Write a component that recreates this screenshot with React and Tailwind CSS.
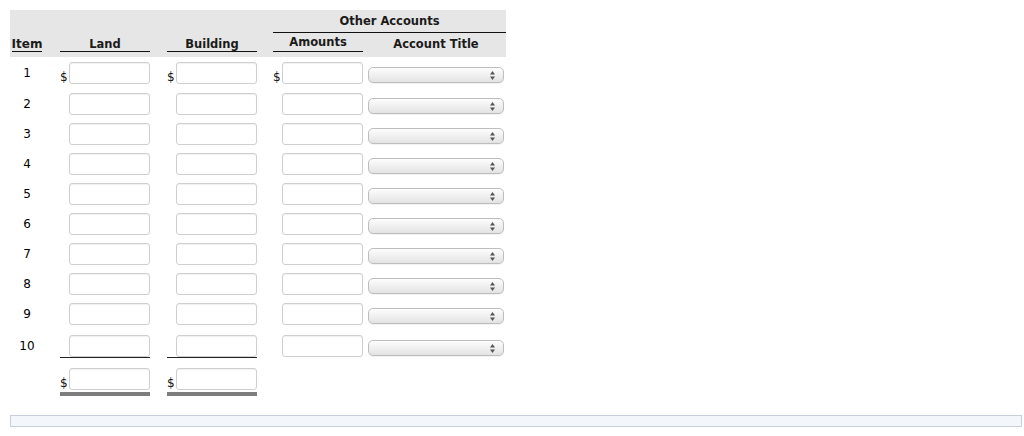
import React from "react";

const font = { fontFamily: "'DejaVu Sans', Verdana, sans-serif" };

function Input() {
  return (
    <div className="w-[81px] h-[22px] border border-[#cfcfcf] rounded-[3px] bg-white shadow-[inset_0_1px_1px_rgba(0,0,0,0.06)]" />
  );
}

function Money({ dollar }) {
  return (
    <div className="flex items-end">
      <span className="w-[9px] text-[12px] leading-[14px] text-[#111]">{dollar ? "$" : ""}</span>
      <Input />
    </div>
  );
}

function Select() {
  return (
    <div className="relative w-[136px] h-[16px] rounded-[5px] border border-[#bdbdbd] bg-gradient-to-b from-[#fdfdfd] to-[#e3e3e3] shadow-[0_1px_0_rgba(0,0,0,0.05)]">
      <svg className="absolute right-[8px] top-[3px]" width="5" height="9" viewBox="0 0 5 9">
        <polygon points="2.5,0 5,3.5 0,3.5" fill="#555" />
        <polygon points="0,5.5 5,5.5 2.5,9" fill="#555" />
      </svg>
    </div>
  );
}

function Row({ n, dollar, h, pt, last }) {
  return (
    <div className={`flex items-start ${h} ${pt}`}>
      <div className="w-[34px] h-[22px] flex items-center justify-center text-[12px] text-black">{n}</div>
      <div className="w-[118px] pl-[16px]">
        <div className={`w-[90px] ${last ? "border-b border-[#222]" : ""}`}>
          <Money dollar={dollar} />
        </div>
      </div>
      <div className="w-[106px] pl-[5px]">
        <div className={`w-[90px] ${last ? "border-b border-[#222]" : ""}`}>
          <Money dollar={dollar} />
        </div>
      </div>
      <div className="w-[98px] pl-[5px]">
        <div className="w-[90px]">
          <Money dollar={dollar} />
        </div>
      </div>
      <div className="w-[140px] pl-[2px] h-[22px] flex items-center pt-[3px]">
        <Select />
      </div>
    </div>
  );
}

export default function App() {
  const rows = [1, 2, 3, 4, 5, 6, 7, 8, 9, 10];
  return (
    <div className="bg-white w-[1024px] h-[436px] pt-[10px] pl-[10px]" style={font}>
      <div className="w-[496px]">
        <div className="bg-[#e6e6e6] h-[47px] text-[#1a1a1a] font-bold">
          <div className="flex h-[23px]">
            <div className="w-[263px]" />
            <div className="w-[233px] border-b border-[#111] text-center text-[11.5px] leading-[20px] pt-[1px]">Other Accounts</div>
          </div>
          <div className="flex items-end h-[24px]">
            <div className="w-[34px] pb-[5px] flex justify-center">
              <span className="text-[12px] leading-[14px] border-b border-[#111]">Item</span>
            </div>
            <div className="w-[118px] pl-[16px] pb-[5px]">
              <div className="w-[90px] border-b border-[#111] text-center text-[11.5px] leading-[14px]">Land</div>
            </div>
            <div className="w-[106px] pl-[5px] pb-[5px]">
              <div className="w-[90px] border-b border-[#111] text-center text-[11.5px] leading-[14px]">Building</div>
            </div>
            <div className="w-[98px] pl-[5px] pb-[5px]">
              <div className="w-[90px] border-b border-[#111] text-center text-[11.5px] leading-[17px]">Amounts</div>
            </div>
            <div className="w-[140px] pb-[6px] text-center text-[11.5px] leading-[14px]">Account Title</div>
          </div>
        </div>
        {rows.map((n) => (
          <Row
            key={n}
            n={n}
            dollar={n === 1}
            h={n === 1 ? "h-[31px]" : "h-[30px]"}
            pt={n === 10 ? "pt-[7px]" : "pt-[5px]"}
            last={n === 10}
          />
        ))}
        <div className="flex pt-[10px]">
          <div className="w-[34px]" />
          <div className="w-[118px] pl-[16px]">
            <div className="w-[90px] pb-[2px] border-b-[4px] border-[#7d7d7d]">
              <Money dollar />
            </div>
          </div>
          <div className="w-[106px] pl-[5px]">
            <div className="w-[90px] pb-[2px] border-b-[4px] border-[#7d7d7d]">
              <Money dollar />
            </div>
          </div>
        </div>
      </div>
      <div className="mt-[19px] w-[1012px] h-[12px] border border-[#c7cfdb] bg-[#f3f7fb]" />
    </div>
  );
}
